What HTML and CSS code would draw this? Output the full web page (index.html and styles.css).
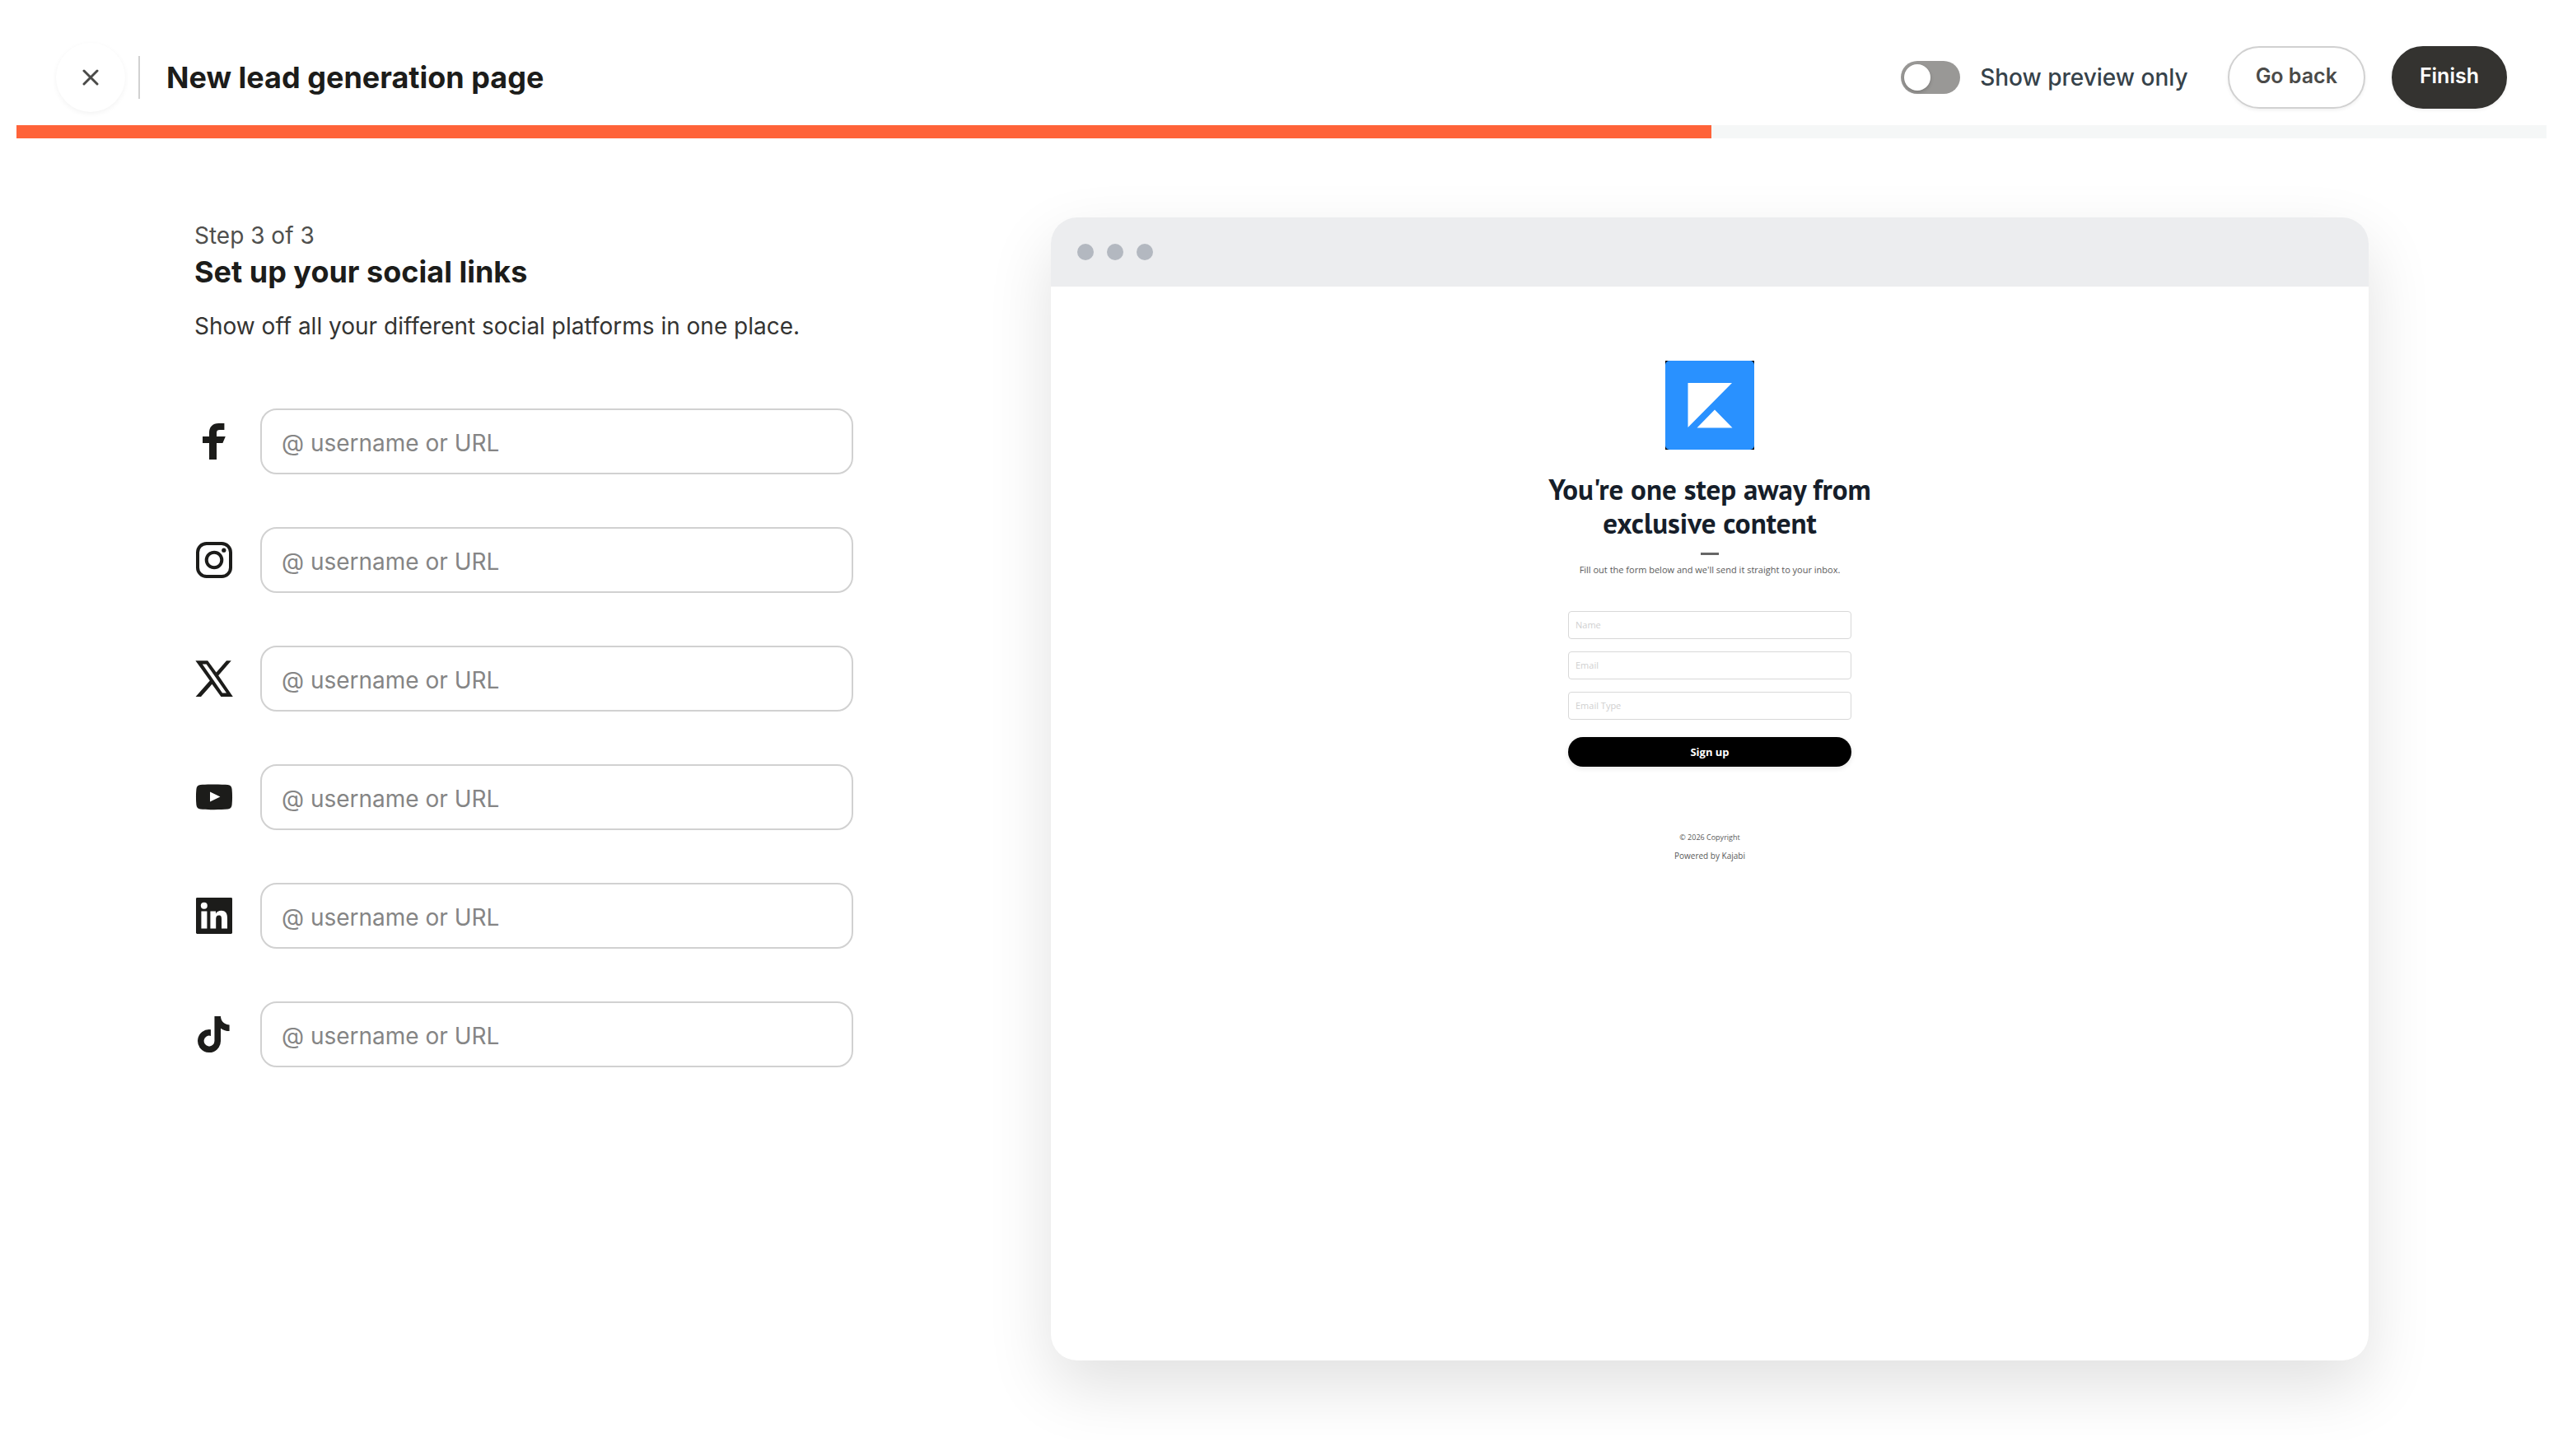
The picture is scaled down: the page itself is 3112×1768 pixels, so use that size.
FILE: index.html
```html
<!DOCTYPE html>
<html lang="en">
<head>
  <meta charset="UTF-8">
  <meta name="viewport" content="width=device-width, initial-scale=1">
  <title>New lead generation page</title>
  <link rel="stylesheet" href="styles.css">
</head>
<body>
<div class="app">
  <header class="topbar">
    <button type="button" class="close-btn" aria-label="Close">
      <svg viewBox="0 0 20 20" width="20" height="20"><path d="M2 2l16 16M18 2L2 18"/></svg>
    </button>
    <h1 class="page-title">New lead generation page</h1>
    <div class="actions">
      <label class="toggle">
        <input type="checkbox" class="switch" role="switch">
        Show preview only
      </label>
      <button type="button" class="btn btn-outline">Go back</button>
      <button type="button" class="btn btn-dark">Finish</button>
    </div>
  </header>

  <div class="progress"><div class="progress-bar" style="width: 67%"></div></div>

  <main class="main">
    <section class="setup">
      <p class="step">Step 3 of 3</p>
      <h2 class="setup-title">Set up your social links</h2>
      <p class="setup-text">Show off all your different social platforms in one place.</p>

      <form class="social-list">
        <div class="social-row">
          <label for="facebook" aria-label="Facebook">
            <svg class="icon" viewBox="0 0 24 24"><path d="M18.2 1h-3.4C11 1 9 3.3 9 6.8V9H5v4h4v10h4.5V13h3.700l1.700-4h-5.400V6.800c0-1.300.6-1.800 1.900-1.800h2.800z"/></svg>
          </label>
          <input type="text" id="facebook" placeholder="@ username or URL">
        </div>
        <div class="social-row">
          <label for="instagram" aria-label="Instagram">
            <svg class="icon" viewBox="0 0 24 24">
              <rect x="2" y="2" width="20" height="20" rx="5.4" fill="none" stroke="currentColor" stroke-width="2"/>
              <circle cx="12" cy="12" r="4.65" fill="none" stroke="currentColor" stroke-width="2"/>
              <circle cx="17.9" cy="6.1" r="1.3"/>
            </svg>
          </label>
          <input type="text" id="instagram" placeholder="@ username or URL">
        </div>
        <div class="social-row">
          <label for="x" aria-label="X">
            <svg class="icon" viewBox="0 0 24 24"><path fill-rule="evenodd" d="M.7 1.1h7.4l5.2 7.1 6.2-7.1h2.9l-7.8 9L23.4 23h-7.2l-5.5-7.6L4 23H.8l8.6-9.8zM4.9 3.2 17 20.8h2.5L7.3 3.2z"/></svg>
          </label>
          <input type="text" id="x" placeholder="@ username or URL">
        </div>
        <div class="social-row">
          <label for="youtube" aria-label="YouTube">
            <svg class="icon" viewBox="0 0 24 24"><path fill-rule="evenodd" d="M12 4.2c3.4 0 6.5.1 8.3.3 1.5.2 2.4 1.1 2.5 2.6.3 3.1.3 6.4 0 9.5-.1 1.5-1 2.5-2.5 2.7-4.5.4-12.1.4-16.6 0-1.5-.2-2.4-1.2-2.5-2.7-.3-3.1-.3-6.4 0-9.5.1-1.5 1-2.4 2.5-2.6 1.8-.2 4.9-.3 8.3-.3zM9.5 8.8v6l6.2-3z"/></svg>
          </label>
          <input type="text" id="youtube" placeholder="@ username or URL">
        </div>
        <div class="social-row">
          <label for="linkedin" aria-label="LinkedIn">
            <svg class="icon" viewBox="0 0 24 24">
              <rect x="1" y="1" width="22" height="22" rx=".7"/>
              <circle cx="5.9" cy="5.9" r="2" fill="#fff"/>
              <path fill="#fff" d="M4.2 9.2h3.5v10.6H4.2zM9.7 9.2H13v1.5c.6-1.1 1.9-1.8 3.3-1.8 3.1 0 3.7 2.2 3.7 4.7v6.2h-3.5V14c0-1.3-.2-2.3-1.6-2.3s-1.8 1-1.8 2.3v5.8H9.7z"/>
            </svg>
          </label>
          <input type="text" id="linkedin" placeholder="@ username or URL">
        </div>
        <div class="social-row">
          <label for="tiktok" aria-label="TikTok">
            <svg class="icon" viewBox="-47 -23 558 558"><path d="M448 209.9a210.1 210.1 0 0 1-122.8-39.3V349.4A162.6 162.6 0 1 1 185 188.3v89.9a74.6 74.6 0 1 0 52.2 71.2V0h88a121.2 121.2 0 0 0 1.9 22.2A122.2 122.2 0 0 0 381 102.4a121.4 121.4 0 0 0 67 20.1z"/></svg>
          </label>
          <input type="text" id="tiktok" placeholder="@ username or URL">
        </div>
      </form>
    </section>

    <section class="browser">
      <div class="browser-bar"><span></span><span></span><span></span></div>
      <div class="landing">
        <svg class="logo" viewBox="0 0 108 108">
          <rect width="108" height="108" fill="#000"/>
          <rect width="108" height="108" rx="5" fill="#2991ff"/>
          <path fill="#fff" d="M27.5 27H81L27.5 81zM60 59.5 81.5 81.5H38.5z"/>
        </svg>
        <h2 class="landing-title">You're one step away from exclusive content</h2>
        <hr class="rule">
        <p class="landing-text">Fill out the form below and we'll send it straight to your inbox.</p>
        <form class="lead-form">
          <input type="text" placeholder="Name" aria-label="Name">
          <input type="email" placeholder="Email" aria-label="Email">
          <input type="text" placeholder="Email Type" aria-label="Email Type">
          <button type="button" class="signup">Sign up</button>
        </form>
        <footer class="landing-footer">
          <p class="copyright">© 2026 Copyright</p>
          <a href="#">Powered by Kajabi</a>
        </footer>
      </div>
    </section>
  </main>
</div>
</body>
</html>
```

FILE: styles.css
```css
* {
  box-sizing: border-box;
}
body {
  margin: 0;
  padding: 20px;
  background: #fff;
  color: #1c1c1a;
  font-family: Inter, "Liberation Sans", sans-serif;
  font-size: 28px;
}
h1, h2, p {
  margin: 0;
}
button, input {
  font-family: inherit;
}
button {
  cursor: pointer;
}

.app {
  display: flex;
  flex-direction: column;
  min-height: calc(100vh - 40px);
  overflow: hidden;
}

/* top bar */
.topbar {
  display: flex;
  align-items: center;
  padding: 32px 48px 16px;
}
.close-btn {
  display: flex;
  align-items: center;
  justify-content: center;
  width: 84px;
  height: 84px;
  padding: 0;
  border: none;
  border-radius: 50%;
  background: #fff;
  box-shadow: 0 2px 6px rgba(0, 0, 0, 0.05);
}
.close-btn path {
  fill: none;
  stroke: #4a4a48;
  stroke-width: 3;
  stroke-linecap: round;
}
.page-title {
  margin-left: 16px;
  padding-left: 32px;
  border-left: 2px solid #d1d1d1;
  font-size: 36px;
  font-weight: 700;
  line-height: 52px;
}
.actions {
  display: flex;
  align-items: center;
  gap: 32px;
  margin-left: auto;
}
.toggle {
  display: flex;
  align-items: center;
  gap: 24px;
  margin-right: 16px;
  color: #36424a;
  font-weight: 500;
  line-height: 40px;
}
.switch {
  appearance: none;
  width: 72px;
  height: 40px;
  margin: 0;
  padding: 4px;
  border-radius: 20px;
  background: #999896;
}
.switch::before {
  content: "";
  display: block;
  width: 32px;
  height: 32px;
  border-radius: 50%;
  background: #fff;
  box-shadow: 0 2px 4px rgba(0, 0, 0, 0.2);
}
.switch:checked::before {
  margin-left: auto;
}
.btn {
  height: 76px;
  padding: 0 32px 4px;
  border: 2px solid #d1d1d1;
  border-radius: 38px;
  background: #fff;
  color: #4a4a48;
  font-size: 25px;
  font-weight: 600;
  box-shadow: 0 2px 4px rgba(0, 0, 0, 0.06);
}
.btn-dark {
  border-color: #343330;
  background: #343330;
  color: #fff;
}

.progress {
  height: 16px;
  background: #f5f7f7;
}
.progress-bar {
  height: 100%;
  background: #ff6339;
}

.main {
  flex: 1;
  display: grid;
  grid-template-columns: 1fr 2fr;
  gap: 240px;
  padding: 96px 216px;
}

/* social links */
.step {
  color: #4f4f4d;
  line-height: 44px;
}
.setup-title {
  font-size: 36px;
  font-weight: 700;
  line-height: 44px;
}
.setup-text {
  margin-top: 22px;
  color: #343432;
  line-height: 44px;
}
.social-list {
  display: grid;
  gap: 64px;
  margin-top: 78px;
}
.social-row {
  display: flex;
  align-items: center;
  gap: 32px;
}
.icon {
  display: block;
  width: 48px;
  height: 48px;
  fill: currentColor;
}
.social-row input {
  flex: 1;
  min-width: 0;
  height: 80px;
  padding: 4px 24px 0;
  border: 2px solid #d1d1d1;
  border-radius: 20px;
  background: #fff;
  font-size: 28px;
}
.social-row input::placeholder {
  color: #858585;
}

/* preview */
.browser {
  border-radius: 32px;
  background: #fff;
  box-shadow: 0 32px 80px rgba(0, 0, 0, 0.12);
}
.browser-bar {
  display: flex;
  align-items: center;
  gap: 16px;
  height: 84px;
  padding: 0 32px;
  border-radius: 32px 32px 0 0;
  background: #ecedef;
}
.browser-bar span {
  width: 20px;
  height: 20px;
  border-radius: 50%;
  background: #b3b8c0;
}
.landing {
  display: flex;
  flex-direction: column;
  align-items: center;
  padding: 90px 24px;
  color: #595959;
  font-family: "Open Sans", "Noto Sans", sans-serif;
  text-align: center;
}
.logo {
  width: 108px;
  height: 108px;
}
.landing-title {
  max-width: 420px;
  margin-top: 28px;
  color: #161e2a;
  font-family: "PT Sans", Lato, sans-serif;
  font-size: 35px;
  font-weight: 700;
  line-height: 41px;
}
.rule {
  width: 22px;
  height: 3px;
  margin: 15px 0 8px;
  border: none;
  background: #666;
}
.landing-text {
  font-size: 11px;
  line-height: 20px;
}
.lead-form {
  display: grid;
  gap: 15px;
  width: 344px;
  max-width: 100%;
  margin-top: 40px;
}
.lead-form input {
  height: 34px;
  padding: 0 8px 2px;
  border: 1px solid #d8d8d8;
  border-radius: 4px;
  background: #fff;
  font-size: 11px;
}
.lead-form input::placeholder {
  color: #d0d0d0;
}
.signup {
  height: 36px;
  margin-top: 6px;
  padding: 0;
  border: none;
  border-radius: 18px;
  background: #000;
  color: #fff;
  font-size: 13px;
  font-weight: 700;
  box-shadow: 0 2px 6px rgba(0, 0, 0, 0.1);
}
.landing-footer {
  margin-top: 76px;
  font-size: 10px;
  line-height: 24px;
}
.landing-footer a {
  color: inherit;
  text-decoration: none;
}
.copyright {
  font-size: 9px;
  line-height: 20px;
}
```
